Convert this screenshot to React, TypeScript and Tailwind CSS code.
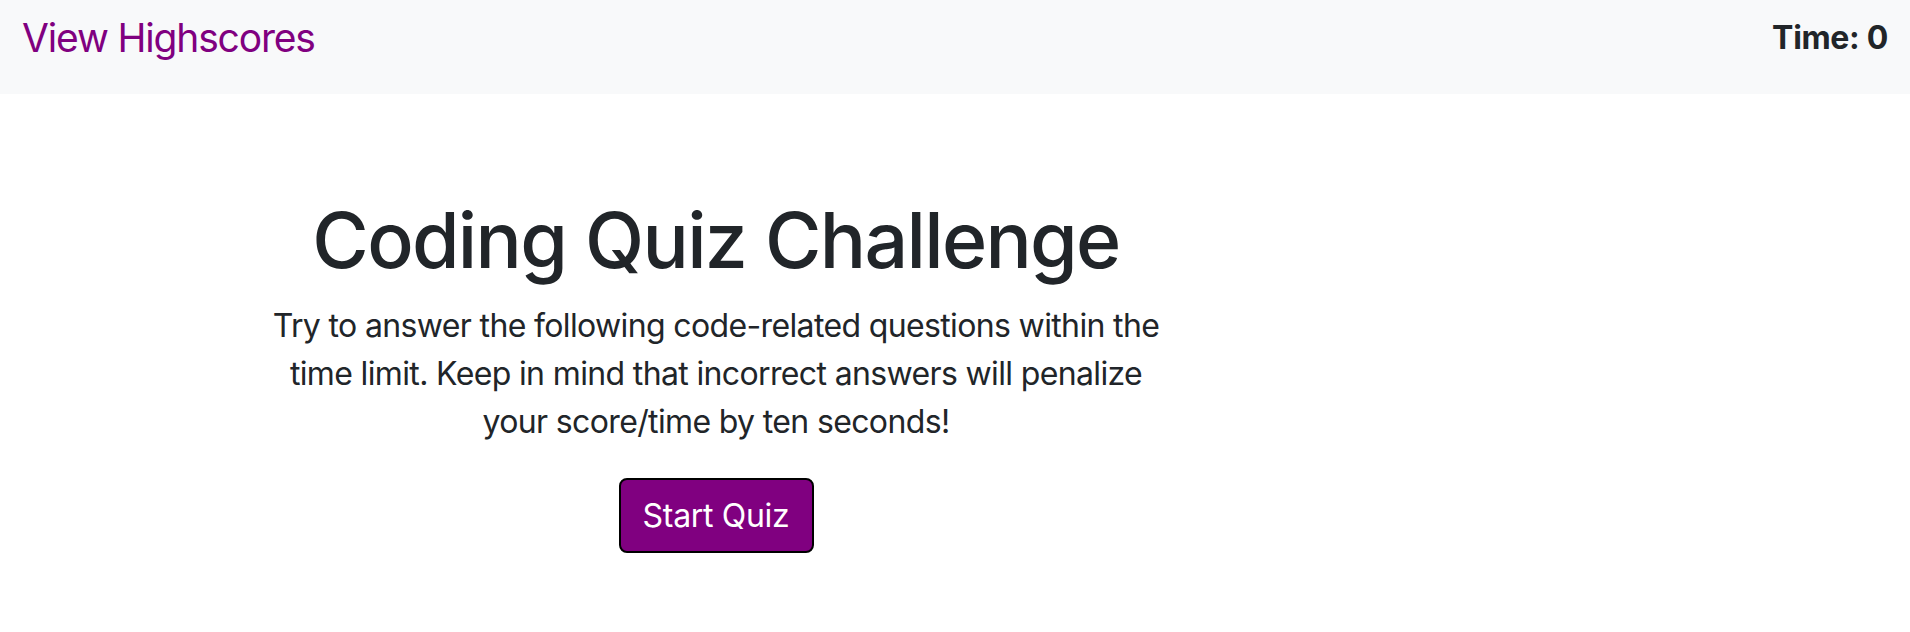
import React from "react";

const App = () => {
  return (
    <div className="min-h-screen bg-white text-[#212529] font-['Inter',sans-serif]">
      {/* top bar */}
      <header className="flex h-[94px] items-start justify-between bg-[#f8f9fa] pl-[22px] pr-[22px]">
        <a href="#" className="mt-[8px] text-[39px] leading-[60px] tracking-[-0.03em] text-[#800080]">
          View Highscores
        </a>
        <div className="mt-[14px] text-[32px] font-bold leading-[48px] tracking-[-0.01em] text-[#212529]">
          Time: 0
        </div>
      </header>

      <main className="flex pl-[256px] pt-[99px]">
        <div className="flex w-[920px] flex-col items-center text-center">
          <h1 className="text-[77px] font-medium leading-[94px] tracking-[-0.022em]">
            Coding Quiz Challenge
          </h1>
          <p className="mt-[15px] text-[32px] leading-[48px] tracking-[-0.02em]">
            Try to answer the following code-related questions within the
            <br />
            time limit. Keep in mind that incorrect answers will penalize
            <br />
            your score/time by ten seconds!
          </p>
          <button
            type="button"
            className="mt-[32px] h-[75px] w-[195px] rounded-[8px] border-2 border-black bg-[#800080] text-[32px] leading-[48px] tracking-[-0.01em] text-white"
          >
            Start Quiz
          </button>
        </div>
      </main>
    </div>
  );
};

export default App;
